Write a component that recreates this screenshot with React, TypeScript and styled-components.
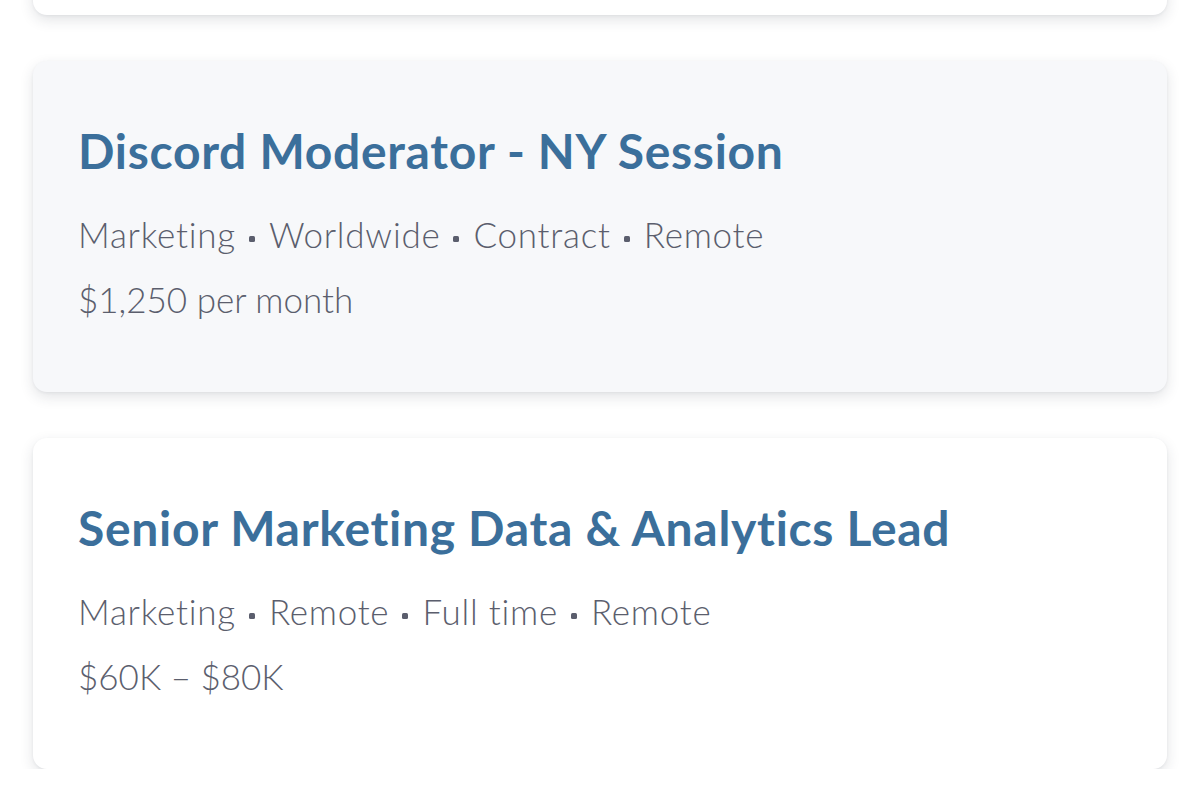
import styled, { createGlobalStyle } from 'styled-components';

interface Job {
  title: string;
  tags: string[];
  pay: string;
  highlighted?: boolean;
}

const GlobalStyle = createGlobalStyle`
  body {
    margin: 0;
    background: #ffffff;
    font-family: Lato, "Open Sans", sans-serif;
    overflow: hidden;
  }
`;

const JobList = styled.div`
  display: flex;
  flex-direction: column;
  gap: 46px;
  padding: 0 33px;
  margin-top: -316px;
`;

const JobCard = styled.div<{ $highlighted?: boolean }>`
  box-sizing: border-box;
  height: 331px;
  padding: 61px 45px 0;
  border-radius: 14px;
  background: ${(props) => (props.$highlighted ? '#f7f8fa' : '#ffffff')};
  box-shadow: 0 5px 14px rgba(40, 44, 60, 0.13), 0 1px 3px rgba(40, 44, 60, 0.06);
`;

const JobTitle = styled.h3`
  margin: 0;
  font-size: 48px;
  line-height: 58px;
  font-weight: 700;
  color: #3b6f9b;
  letter-spacing: 0.7px;
`;

const JobMeta = styled.div`
  margin-top: 33px;
  font-size: 35px;
  line-height: 42px;
  font-weight: 300;
  color: #5b5e6d;
  letter-spacing: 0.75px;
`;

const Dot = styled.span`
  display: inline-block;
  width: 6px;
  height: 6px;
  margin: 0 14px 0 13px;
  vertical-align: middle;
  background: #5b5e6d;
  border-radius: 1.5px;
`;

const JobPay = styled.div`
  margin-top: 23px;
  font-size: 35px;
  line-height: 42px;
  font-weight: 300;
  color: #5b5e6d;
  letter-spacing: 0;
`;

const jobs: Job[] = [
  {
    title: 'Discord Moderator - NY Session',
    tags: ['Marketing', 'Worldwide', 'Contract', 'Remote'],
    pay: '$1,250 per month',
    highlighted: true
  },
  {
    title: 'Senior Marketing Data & Analytics Lead',
    tags: ['Marketing', 'Remote', 'Full time', 'Remote'],
    pay: '$60K – $80K'
  }
];

function App() {
  return (
    <>
      <GlobalStyle />
      <JobList>
        {/* previous card, scrolled mostly out of view */}
        <JobCard />
        {jobs.map((job) => (
          <JobCard key={job.title} $highlighted={job.highlighted}>
            <JobTitle>{job.title}</JobTitle>
            <JobMeta>
              {job.tags.map((tag, i) => (
                <span key={i}>
                  {i > 0 && <Dot />}
                  {tag}
                </span>
              ))}
            </JobMeta>
            <JobPay>{job.pay}</JobPay>
          </JobCard>
        ))}
      </JobList>
    </>
  );
}

export default App;
